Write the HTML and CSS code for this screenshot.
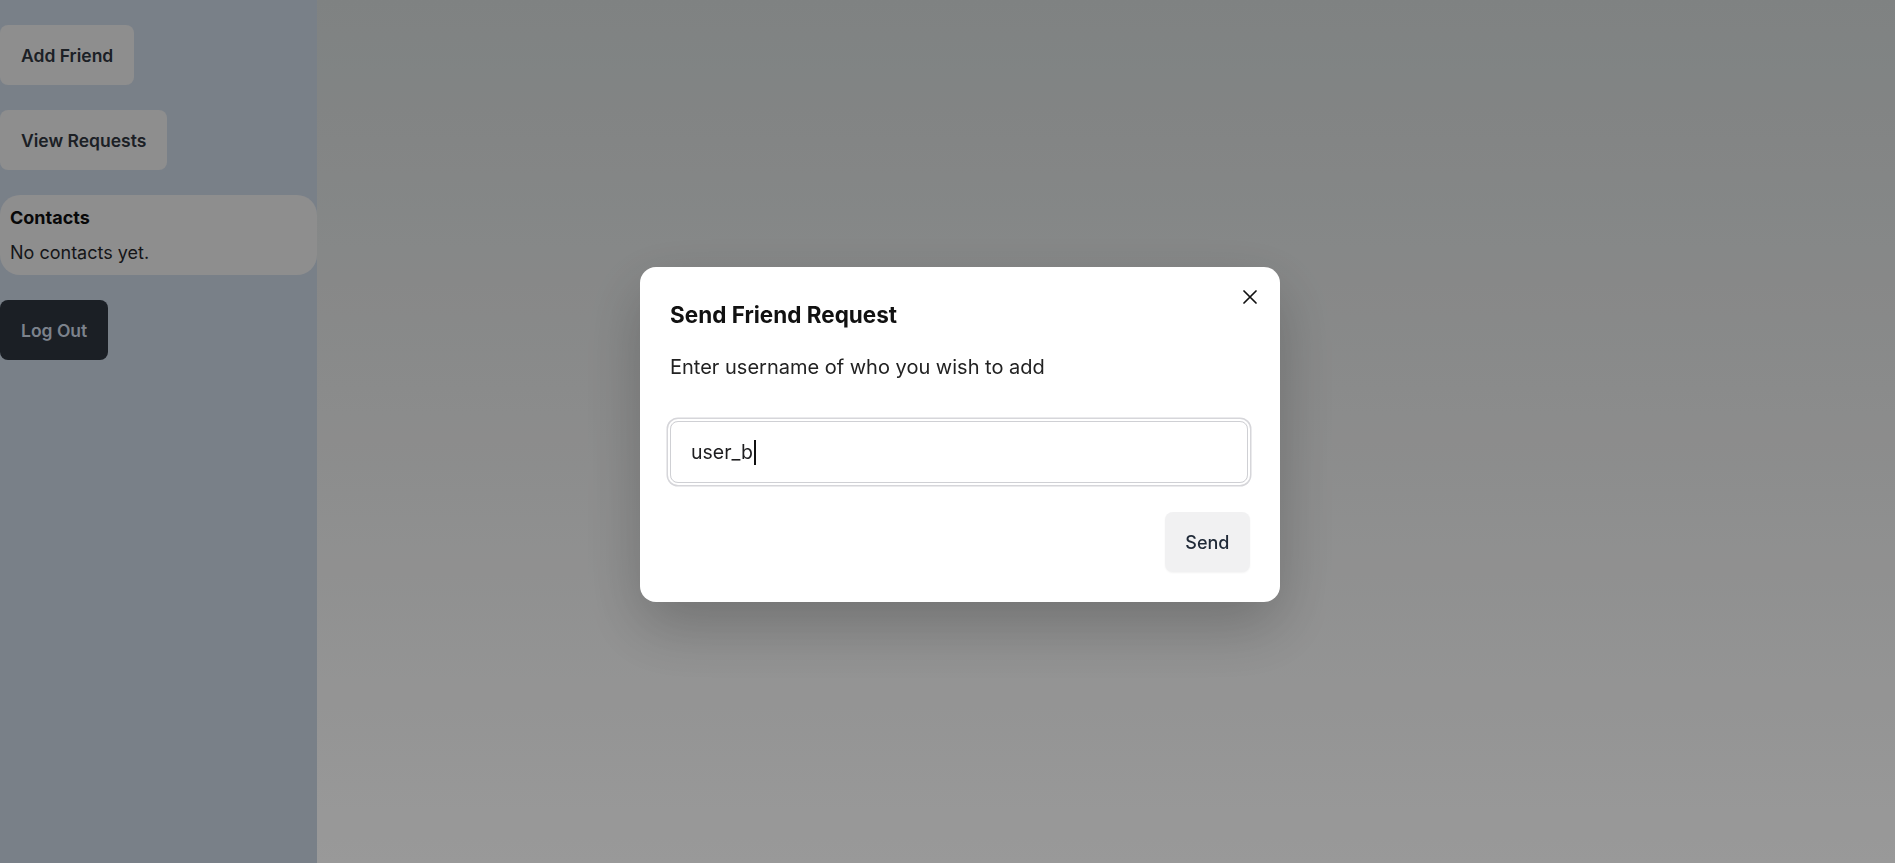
FILE: index.html
```html
<!DOCTYPE html>
<html lang="en">
<head>
<meta charset="utf-8">
<title>Chat</title>
<link rel="stylesheet" href="styles.css">
</head>
<body>
<div class="app">
  <aside class="sidebar">
    <button class="side-btn">Add Friend</button>
    <button class="side-btn">View Requests</button>
    <section class="contacts">
      <h3 class="contacts-title">Contacts</h3>
      <p class="contacts-empty">No contacts yet.</p>
    </section>
    <button class="side-btn logout">Log Out</button>
  </aside>
  <main class="main"></main>
</div>
<div class="overlay">
  <div class="modal" role="dialog">
    <button class="close" aria-label="Close">
      <svg width="14" height="14" viewBox="0 0 14 14"><path d="M1 1L13 13M13 1L1 13" stroke="#111" stroke-width="1.7" stroke-linecap="round"/></svg>
    </button>
    <h2 class="modal-title">Send Friend Request</h2>
    <p class="modal-text">Enter username of who you wish to add</p>
    <div class="field" role="textbox" aria-label="Username">
      <span class="field-value">user_b</span><span class="caret"></span>
    </div>
    <div class="modal-actions">
      <button class="send-btn">Send</button>
    </div>
  </div>
</div>
</body>
</html>
```

FILE: styles.css
```css
* { box-sizing: border-box; }
html, body { margin: 0; padding: 0; height: 100%; }
body {
  font-family: Inter, "Noto Sans", sans-serif;
  color: #1f2329;
}
.app {
  display: flex;
  height: 100vh;
}
.sidebar {
  width: 317px;
  flex-shrink: 0;
  background: #98a0ab;
  padding-top: 25px;
  display: flex;
  flex-direction: column;
  align-items: flex-start;
  gap: 25px;
}
.side-btn {
  height: 60px;
  padding: 0 21px;
  border: none;
  border-radius: 8px;
  background: #b2b2b2;
  color: #24282f;
  font-family: inherit;
  font-size: 17.5px;
  font-weight: 600;
  cursor: pointer;
}
.side-btn.logout {
  background: #22272f;
  color: #9ca3af;
}
.contacts {
  width: 100%;
  background: #b2b2b2;
  border-radius: 20px;
  padding: 9px 10px 8px;
  display: flex;
  flex-direction: column;
  gap: 7px;
}
.contacts-title {
  margin: 0;
  font-size: 18px;
  line-height: 28px;
  font-weight: 700;
  color: #0b0b0c;
}
.contacts-empty {
  margin: 0;
  font-size: 18px;
  line-height: 28px;
  color: #1a1b1e;
}
.main {
  flex: 1;
  background: linear-gradient(to bottom, #9fa3a3 0%, #adaeae 45%, #c0c0c0 100%);
}
.overlay {
  position: fixed;
  inset: 0;
  background: rgba(0, 0, 0, 0.2);
  display: flex;
  align-items: center;
  justify-content: center;
  padding-left: 25px;
  padding-top: 6px;
}
.modal {
  position: relative;
  width: 640px;
  background: #fff;
  border-radius: 16px;
  padding: 34px 32px 30px 30px;
  box-shadow: 0 24px 60px rgba(0, 0, 0, 0.22);
  display: flex;
  flex-direction: column;
}
.close {
  position: absolute;
  top: 22px;
  right: 22px;
  width: 16px;
  height: 16px;
  padding: 1px;
  border: none;
  background: transparent;
  display: flex;
  cursor: pointer;
}
.modal-title {
  margin: 0;
  font-size: 22.5px;
  line-height: 28px;
  font-weight: 700;
  color: #111;
}
.modal-text {
  margin: 24px 0 0;
  font-size: 20px;
  line-height: 28px;
  color: #222;
}
.field {
  margin-top: 40px;
  height: 62px;
  width: 100%;
  border: 1px solid #cfd0d4;
  border-radius: 8px;
  padding: 0 20px;
  display: flex;
  align-items: center;
  font-size: 19.5px;
  color: #1d1d1f;
  box-shadow: 0 0 0 2px #fff, 0 0 0 3.5px #d6d6da;
  cursor: text;
}
.caret {
  width: 1.5px;
  height: 25px;
  margin-left: 1px;
  background: #111;
}
.modal-actions {
  margin-top: 29px;
  display: flex;
  justify-content: flex-end;
}
.send-btn {
  height: 60px;
  padding: 0 20.5px;
  margin-right: -2px;
  border: none;
  border-radius: 8px;
  background: #f1f1f2;
  color: #1f2937;
  font-family: inherit;
  font-size: 18px;
  font-weight: 500;
  box-shadow: 0 1px 2px rgba(0, 0, 0, 0.05);
  cursor: pointer;
}
```
